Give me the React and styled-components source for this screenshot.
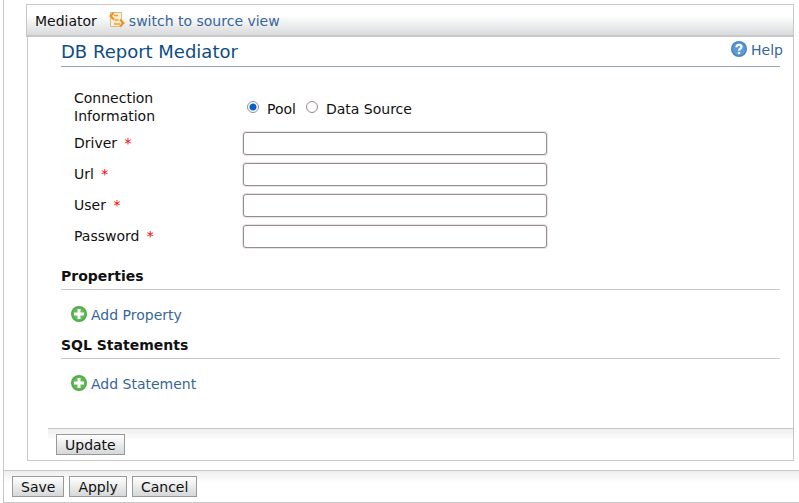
import React, { useState } from "react";
import styled, { createGlobalStyle } from "styled-components";

const GlobalStyle = createGlobalStyle`
  * { box-sizing: border-box; }
  body {
    margin: 0;
    background: #fff;
    color: #111;
    font: 14px/18px "DejaVu Sans", Verdana, sans-serif;
  }
`;

const Page = styled.div`
  margin-left: 3px;
  border-left: 1px solid #c8c8c8;
  border-bottom: 1px solid #c8c8c8;
`;

const Panel = styled.section`
  padding: 4px 5px 9px 22px;
`;

const PanelHeader = styled.header`
  display: flex;
  align-items: center;
  height: 33px;
  padding: 2px 8px 0;
  gap: 12px;
  border: 1px solid #c8c8c8;
  border-bottom-width: 2px;
  background: linear-gradient(#fff 35%, #d8dadb);
`;

const PanelBody = styled.div`
  margin-left: 1px;
  border: 1px solid #c8c8c8;
  border-top: 0;
`;

const Link = styled.a`
  display: inline-flex;
  align-items: center;
  gap: 4px;
  color: #386698;
  text-decoration: none;
  svg { margin-bottom: 2px; }
`;

const Content = styled.div`
  padding: 0 13px 0 33px;
`;

const TitleRow = styled.div`
  display: flex;
  justify-content: space-between;
  align-items: flex-start;
  height: 30px;
  padding-top: 4px;
  margin-bottom: 22px;
  border-bottom: 1px solid #92a6ca;
`;

const Title = styled.h1`
  margin: 0;
  font-size: 18px;
  line-height: 22px;
  font-weight: normal;
  color: #0d4d83;
`;

const HelpLink = styled(Link)`
  margin-right: -3px;
`;

const Fields = styled.div`
  display: grid;
  grid-template-columns: 169px 1fr;
  grid-auto-rows: minmax(24px, auto);
  row-gap: 7px;
  padding-left: 13px;
  align-items: start;
`;

const GroupLabel = styled.span`
  max-width: 110px;
`;

const Label = styled.label`
  padding-top: 2px;
`;

const Required = styled.span`
  margin-left: 3px;
  color: #f00;
`;

const TextInput = styled.input`
  width: 304px;
  max-width: 100%;
  height: 23px;
  padding: 0 5px;
  border: 1px solid #958c8c;
  border-radius: 3px;
  box-shadow: 0 0 0 1px #e8e6e4;
  background: #fff;
  font: inherit;
`;

const RadioGroup = styled.div`
  display: flex;
  gap: 10px;
  padding: 11px 0 0 4px;
`;

const RadioLabel = styled.label`
  display: flex;
  align-items: flex-start;
  gap: 8px;
`;

const Radio = styled.input`
  appearance: none;
  width: 12px;
  height: 12px;
  margin: 1px 0 0;
  border: 1px solid #958c8c;
  border-radius: 50%;
  background: #fff;
  &:checked {
    background: radial-gradient(circle, #0860c4 3px, #fff 4px);
  }
`;

const SectionTitle = styled.h2`
  margin: 0;
  padding-bottom: 4px;
  border-bottom: 1px solid #c8c8c8;
  font-size: 14px;
  line-height: 18px;
`;

const Section = styled.section`
  padding-top: 18px;
  & + & { padding-top: 10px; }
`;

const AddRow = styled.div`
  padding: 16px 0 0 10px;
`;

const ButtonBar = styled.div`
  display: flex;
  gap: 5px;
  padding: 5px 8px;
  border-top: 1px solid #c8c8c8;
  background: linear-gradient(#eee, #fff 12px);
`;

const InnerBar = styled(ButtonBar)`
  margin: 33px 0 0 20px;
`;

const Button = styled.button`
  height: 21px;
  padding: 0 8px;
  border: 1px solid #999;
  border-radius: 0;
  background: linear-gradient(#fff, #d6d7d8);
  color: #111;
  font: inherit;
  line-height: 18px;
`;

const SourceIcon = () => (
  <svg width="16" height="16" viewBox="0 0 16 16" aria-hidden="true">
    <path d="M1.5.5h11v14h-11z" fill="#f8f0d8" stroke="#d0bf83" />
    <path d="M5 3.5h4M5 12h6M5.5 8h4" stroke="#fc9b2e" strokeWidth="1.3" />
    <path d="M4.5 1L1.5 4L5 7.5M11 7.5l3.5 3.5L11 14.5" fill="none" stroke="#fb8c19" strokeWidth="2" />
  </svg>
);

const HelpIcon = () => (
  <svg width="16" height="16" viewBox="0 0 16 16" aria-hidden="true">
    <circle cx="8" cy="8" r="8" fill="#4585c8" />
    <circle cx="8" cy="8" r="6.5" fill="#5f9ad3" />
    <path d="M5.5 6.2C5.5 2.8 10.7 3.2 10.5 6C10.4 7.7 8 7.7 8 9.7" fill="none" stroke="#fff" strokeWidth="2.2" />
    <circle cx="8" cy="12" r="1.3" fill="#fff" />
  </svg>
);

const AddIcon = () => (
  <svg width="16" height="16" viewBox="0 0 16 16" aria-hidden="true">
    <circle cx="8" cy="8" r="8" fill="#4bae45" />
    <circle cx="8" cy="8" r="6.5" fill="#62b957" />
    <path d="M8 3v10M3 8h10" stroke="#fff" strokeWidth="3" />
  </svg>
);

const fields = [
  { id: "driver", label: "Driver", type: "text" },
  { id: "url", label: "Url", type: "text" },
  { id: "user", label: "User", type: "text" },
  { id: "password", label: "Password", type: "password" },
];

const sources = ["Pool", "Data Source"];

const sections = [
  { title: "Properties", action: "Add Property" },
  { title: "SQL Statements", action: "Add Statement" },
];

export default function App() {
  const [source, setSource] = useState("Pool");
  return (
    <>
      <GlobalStyle />
      <Page>
        <Panel>
          <PanelHeader>
            <span>Mediator</span>
            <Link href="#source"><SourceIcon />switch to source view</Link>
          </PanelHeader>
          <PanelBody>
            <Content>
              <TitleRow>
                <Title>DB Report Mediator</Title>
                <HelpLink href="#help"><HelpIcon />Help</HelpLink>
              </TitleRow>
              <Fields>
                <GroupLabel id="connection">Connection Information</GroupLabel>
                <RadioGroup role="radiogroup" aria-labelledby="connection">
                  {sources.map((name) => (
                    <RadioLabel key={name}>
                      <Radio
                        type="radio"
                        name="connection"
                        checked={source === name}
                        onChange={() => setSource(name)}
                      />
                      {name}
                    </RadioLabel>
                  ))}
                </RadioGroup>
                {fields.map(({ id, label, type }) => (
                  <React.Fragment key={id}>
                    <Label htmlFor={id}>{label} <Required>*</Required></Label>
                    <TextInput id={id} type={type} />
                  </React.Fragment>
                ))}
              </Fields>
              {sections.map(({ title, action }) => (
                <Section key={title}>
                  <SectionTitle>{title}</SectionTitle>
                  <AddRow>
                    <Link href="#add"><AddIcon />{action}</Link>
                  </AddRow>
                </Section>
              ))}
            </Content>
            <InnerBar><Button type="button">Update</Button></InnerBar>
          </PanelBody>
        </Panel>
        <ButtonBar>
          <Button type="button">Save</Button>
          <Button type="button">Apply</Button>
          <Button type="button">Cancel</Button>
        </ButtonBar>
      </Page>
    </>
  );
}
